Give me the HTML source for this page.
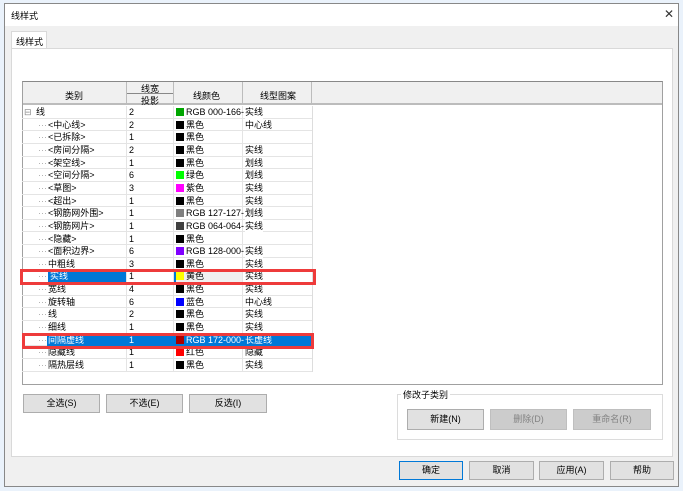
<!DOCTYPE html>
<html><head><meta charset="utf-8"><style>
*{margin:0;padding:0;box-sizing:border-box}
body{width:683px;height:491px;background:#eaf2fb;position:relative;overflow:hidden;font-family:"Liberation Sans","Noto Sans CJK SC",sans-serif;font-size:9px;color:#000}
.a{position:absolute}
.dlg{left:4px;top:3px;width:675px;height:484px;background:#f0f0f0;border:1px solid #888}
.title{left:0;top:0;width:673px;height:22px;background:#fff}
.btn{position:absolute;background:#e1e1e1;border:1px solid #adadad;text-align:center;font-size:9px}
.dis{background:#cccccc;border-color:#bfbfbf;color:#838383}
.row{position:absolute;left:0;width:290px;height:12.65px;border-bottom:1px solid #e4e4e4;line-height:12.65px;white-space:nowrap}
.row span{position:absolute;top:0}
.c2{left:107px}
.c4{left:223px}
.sw{position:absolute;left:154px;top:2px;width:8px;height:8px}
.vl{position:absolute;top:0;width:1px;background:#e4e4e4}
</style></head><body>
<div class="a dlg">
 <div class="a title"><span class="a" style="left:6px;top:5px;font-size:9px">线样式</span><span class="a" style="left:659px;top:3px;font-size:12px;color:#333">✕</span></div>
 <div class="a" style="left:6px;top:27px;width:36px;height:18px;background:#fff;border:1px solid #d9d9d9;border-bottom:none;padding:3px 0 0 4px">线样式</div>
 <div class="a" style="left:6px;top:44px;width:662px;height:409px;background:#fff;border:1px solid #d9d9d9"></div>
</div>
<div class="a" style="left:22px;top:81px;width:641px;height:304px;border:1px solid #a0a0a0;border-top:1px solid #888;background:#fff"></div>
<div class="a" style="left:23px;top:82px;width:639px;height:23px;background:#f0f0f0;border-bottom:2px solid #bcbcbc"></div>
<div class="a" style="left:126px;top:82px;width:1px;height:23px;background:#bcbcbc"></div>
<div class="a" style="left:173px;top:82px;width:1px;height:23px;background:#bcbcbc"></div>
<div class="a" style="left:242px;top:82px;width:1px;height:23px;background:#bcbcbc"></div>
<div class="a" style="left:311px;top:82px;width:1px;height:23px;background:#bcbcbc"></div>
<div class="a" style="left:127px;top:93px;width:46px;height:1px;background:#888"></div>
<span class="a" style="left:65px;top:89px">类别</span>
<span class="a" style="left:141px;top:82px">线宽</span>
<span class="a" style="left:141px;top:94px">投影</span>
<span class="a" style="left:193px;top:89px">线颜色</span>
<span class="a" style="left:260px;top:89px">线型图案</span>
<div class="a" style="left:22px;top:106px;width:291px;height:266px;border-right:1px solid #ddd;border-bottom:1px solid #ddd">
<div class="vl" style="left:104px;height:265px"></div><div class="vl" style="left:151px;height:265px"></div><div class="vl" style="left:220px;height:265px"></div>
<div class="row" style="top:0"><span style="left:2px;color:#888">⊟</span><span style="left:14px">线</span><span class="c2">2</span><i class="sw" style="background:#00a600"></i><span style="left:164px">RGB 000-166-</span><span class="c4" style="background:#fff">实线</span></div>
<div class="row" style="top:12.65px"><span style="left:16px;color:#aaa">···</span><span style="left:26px">&lt;中心线&gt;</span><span class="c2">2</span><i class="sw" style="background:#000"></i><span style="left:164px">黑色</span><span class="c4">中心线</span></div>
<div class="row" style="top:25.3px"><span style="left:16px;color:#aaa">···</span><span style="left:26px">&lt;已拆除&gt;</span><span class="c2">1</span><i class="sw" style="background:#000"></i><span style="left:164px">黑色</span></div>
<div class="row" style="top:37.95px"><span style="left:16px;color:#aaa">···</span><span style="left:26px">&lt;房间分隔&gt;</span><span class="c2">2</span><i class="sw" style="background:#000"></i><span style="left:164px">黑色</span><span class="c4">实线</span></div>
<div class="row" style="top:50.6px"><span style="left:16px;color:#aaa">···</span><span style="left:26px">&lt;架空线&gt;</span><span class="c2">1</span><i class="sw" style="background:#000"></i><span style="left:164px">黑色</span><span class="c4">划线</span></div>
<div class="row" style="top:63.25px"><span style="left:16px;color:#aaa">···</span><span style="left:26px">&lt;空间分隔&gt;</span><span class="c2">6</span><i class="sw" style="background:#0f0"></i><span style="left:164px">绿色</span><span class="c4">划线</span></div>
<div class="row" style="top:75.9px"><span style="left:16px;color:#aaa">···</span><span style="left:26px">&lt;草图&gt;</span><span class="c2">3</span><i class="sw" style="background:#f0f"></i><span style="left:164px">紫色</span><span class="c4">实线</span></div>
<div class="row" style="top:88.55px"><span style="left:16px;color:#aaa">···</span><span style="left:26px">&lt;超出&gt;</span><span class="c2">1</span><i class="sw" style="background:#000"></i><span style="left:164px">黑色</span><span class="c4">实线</span></div>
<div class="row" style="top:101.2px"><span style="left:16px;color:#aaa">···</span><span style="left:26px">&lt;钢筋网外围&gt;</span><span class="c2">1</span><i class="sw" style="background:#7f7f7f"></i><span style="left:164px">RGB 127-127-</span><span class="c4" style="background:#fff">划线</span></div>
<div class="row" style="top:113.85px"><span style="left:16px;color:#aaa">···</span><span style="left:26px">&lt;钢筋网片&gt;</span><span class="c2">1</span><i class="sw" style="background:#404040"></i><span style="left:164px">RGB 064-064-</span><span class="c4" style="background:#fff">实线</span></div>
<div class="row" style="top:126.5px"><span style="left:16px;color:#aaa">···</span><span style="left:26px">&lt;隐藏&gt;</span><span class="c2">1</span><i class="sw" style="background:#000"></i><span style="left:164px">黑色</span></div>
<div class="row" style="top:139.15px"><span style="left:16px;color:#aaa">···</span><span style="left:26px">&lt;面积边界&gt;</span><span class="c2">6</span><i class="sw" style="background:#8000ff"></i><span style="left:164px">RGB 128-000-</span><span class="c4" style="background:#fff">实线</span></div>
<div class="row" style="top:151.8px"><span style="left:16px;color:#aaa">···</span><span style="left:26px">中粗线</span><span class="c2">3</span><i class="sw" style="background:#000"></i><span style="left:164px">黑色</span><span class="c4">实线</span></div>
<div class="row" style="top:164.45px"><div class="a" style="left:26px;top:0;width:78px;height:12px;background:#0078d7"></div><div class="a" style="left:152px;top:0;width:68px;height:12px;background:#f0f0f0;border-left:2px solid #0078d7"></div><span style="left:16px;color:#aaa">···</span><span style="left:28px;color:#fff">实线</span><span class="c2">1</span><i class="sw" style="background:#ff0"></i><span style="left:164px">黄色</span><span class="c4">实线</span></div>
<div class="row" style="top:177.1px"><span style="left:16px;color:#aaa">···</span><span style="left:26px">宽线</span><span class="c2">4</span><i class="sw" style="background:#000"></i><span style="left:164px">黑色</span><span class="c4">实线</span></div>
<div class="row" style="top:189.75px"><span style="left:16px;color:#aaa">···</span><span style="left:26px">旋转轴</span><span class="c2">6</span><i class="sw" style="background:#00f"></i><span style="left:164px">蓝色</span><span class="c4">中心线</span></div>
<div class="row" style="top:202.4px"><span style="left:16px;color:#aaa">···</span><span style="left:26px">线</span><span class="c2">2</span><i class="sw" style="background:#000"></i><span style="left:164px">黑色</span><span class="c4">实线</span></div>
<div class="row" style="top:215.05px"><span style="left:16px;color:#aaa">···</span><span style="left:26px">细线</span><span class="c2">1</span><i class="sw" style="background:#000"></i><span style="left:164px">黑色</span><span class="c4">实线</span></div>
<div class="row" style="top:227.7px"><div class="a" style="left:25px;top:0;width:265px;height:12px;background:#0078d7"></div><span style="left:16px;color:#aaa">···</span><span style="left:26px;color:#fff">间隔虚线</span><span class="c2" style="color:#fff">1</span><i class="sw" style="background:#ac0000"></i><span style="left:164px;color:#fff">RGB 172-000-</span><span class="c4" style="color:#fff;background:#0078d7">长虚线</span></div>
<div class="row" style="top:240.35px"><span style="left:16px;color:#aaa">···</span><span style="left:26px">隐藏线</span><span class="c2">1</span><i class="sw" style="background:#f00"></i><span style="left:164px">红色</span><span class="c4">隐藏</span></div>
<div class="row" style="top:253px"><span style="left:16px;color:#aaa">···</span><span style="left:26px">隔热层线</span><span class="c2">1</span><i class="sw" style="background:#000"></i><span style="left:164px">黑色</span><span class="c4">实线</span></div>
</div>
<div class="a" style="left:20px;top:269px;width:296px;height:16px;border:3px solid #ee3b3b"></div>
<div class="a" style="left:22px;top:333px;width:292px;height:16px;border:3px solid #ee3b3b"></div>
<div class="btn" style="left:23px;top:394px;width:77px;height:19px;line-height:17px">全选(S)</div>
<div class="btn" style="left:106px;top:394px;width:77px;height:19px;line-height:17px">不选(E)</div>
<div class="btn" style="left:189px;top:394px;width:78px;height:19px;line-height:17px">反选(I)</div>
<div class="a" style="left:397px;top:394px;width:266px;height:46px;border:1px solid #dcdcdc"></div>
<span class="a" style="left:401px;top:388px;background:#fff;padding:0 2px">修改子类别</span>
<div class="btn" style="left:407px;top:409px;width:77px;height:21px;line-height:19px">新建(N)</div>
<div class="btn dis" style="left:490px;top:409px;width:77px;height:21px;line-height:19px">删除(D)</div>
<div class="btn dis" style="left:573px;top:409px;width:78px;height:21px;line-height:19px">重命名(R)</div>
<div class="btn" style="left:399px;top:461px;width:64px;height:19px;line-height:17px;border:1px solid #0078d7">确定</div>
<div class="btn" style="left:469px;top:461px;width:65px;height:19px;line-height:17px">取消</div>
<div class="btn" style="left:539px;top:461px;width:65px;height:19px;line-height:17px">应用(A)</div>
<div class="btn" style="left:610px;top:461px;width:64px;height:19px;line-height:17px">帮助</div>
</body></html>
